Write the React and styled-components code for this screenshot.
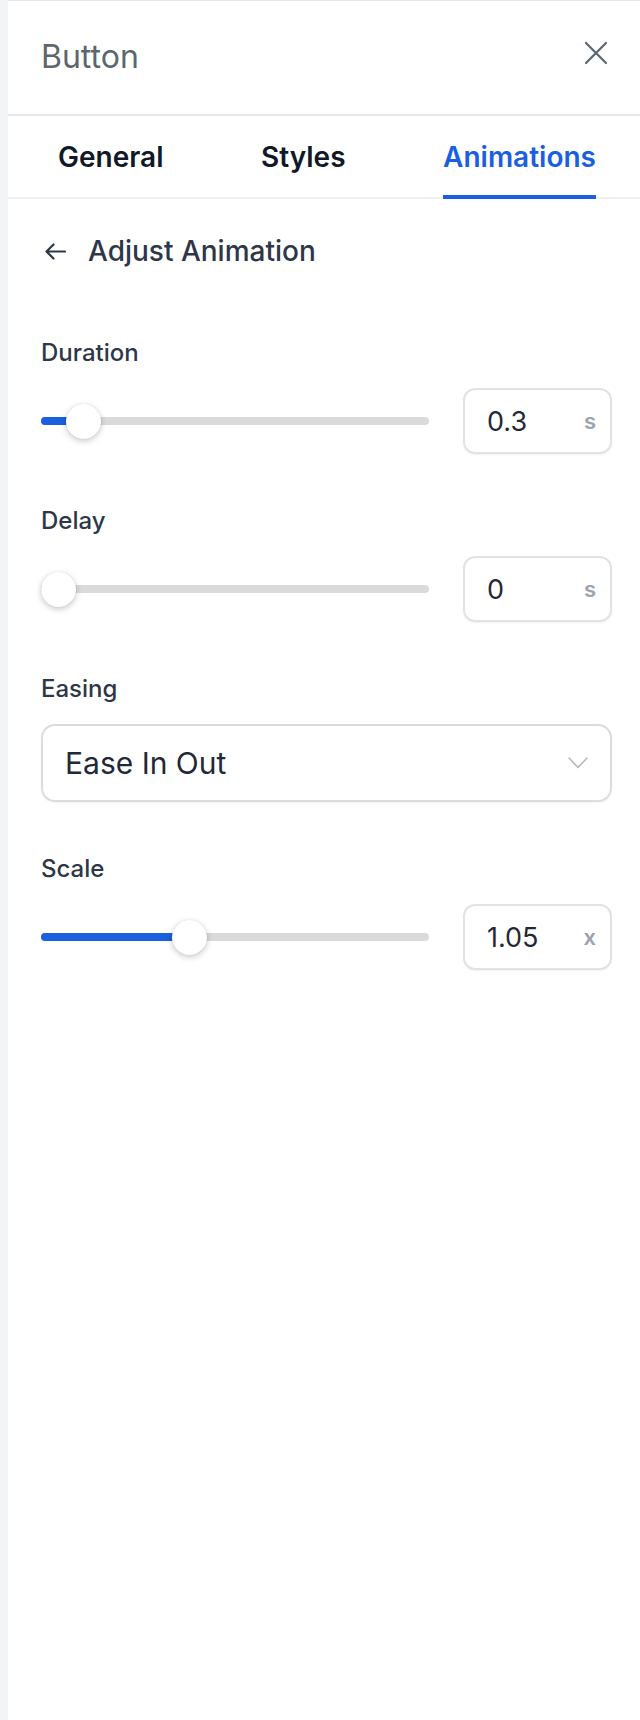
import React from "react";
import styled, { createGlobalStyle } from "styled-components";

const GlobalStyle = createGlobalStyle`
  html, body {
    margin: 0;
    padding: 0;
    background: #f3f4f6;
    font-family: Inter, "Noto Sans", sans-serif;
  }
  * {
    box-sizing: border-box;
  }
`;

const Panel = styled.div`
  margin-left: 8px;
  min-height: 1720px;
  background: #ffffff;
  border-top: 1px solid #e5e7eb;
  display: flex;
  flex-direction: column;
`;

const Header = styled.div`
  height: 115px;
  display: flex;
  align-items: center;
  justify-content: space-between;
  padding: 0 32px 0 33px;
  border-bottom: 2px solid #e5e7eb;
`;

const Title = styled.div`
  font-size: 32px;
  font-weight: 400;
  color: #5b666f;
  padding-bottom: 2px;
`;

const CloseButton = styled.button`
  border: 0;
  background: none;
  padding: 0;
  display: flex;
  color: #5b666f;
  margin-top: -10px;
`;

const Tabs = styled.div`
  height: 83px;
  display: flex;
  justify-content: space-between;
  padding: 0 44px 0 50px;
  border-bottom: 2px solid #f0f0f0;
`;

const Tab = styled.div`
  display: flex;
  align-items: center;
  padding-top: 2px;
  font-size: 28px;
  font-weight: 600;
  color: ${props => (props.active ? "#1a5fe0" : "#111827")};
  border-bottom: 4px solid ${props => (props.active ? "#1a5fe0" : "transparent")};
  margin-bottom: -2px;
`;

const Content = styled.div`
  padding: 37px 28px 0 33px;
  display: flex;
  flex-direction: column;
`;

const BackRow = styled.div`
  height: 30px;
  display: flex;
  align-items: center;
  gap: 22px;
  margin-bottom: 72px;
  color: #2d3748;
  font-size: 28px;
  font-weight: 500;
  svg {
    margin-left: 4px;
  }
`;

const Sections = styled.div`
  display: flex;
  flex-direction: column;
  gap: 52px;
`;

const Section = styled.div`
  display: flex;
  flex-direction: column;
`;

const Label = styled.div`
  font-size: 24px;
  line-height: 29px;
  font-weight: 500;
  color: #2d3748;
  margin-bottom: 21px;
`;

const ControlRow = styled.div`
  display: flex;
  align-items: center;
  gap: 34px;
`;

const Track = styled.div`
  position: relative;
  flex: 1;
  height: 8px;
  border-radius: 4px;
  background: #dadada;
`;

const Fill = styled.div`
  position: absolute;
  left: 0;
  top: 0;
  bottom: 0;
  border-radius: 4px;
  background: #1a5fe0;
`;

const Thumb = styled.div`
  position: absolute;
  top: 50%;
  width: 35px;
  height: 35px;
  margin-top: -17.5px;
  border-radius: 50%;
  background: #ffffff;
  box-shadow: 0 2px 6px rgba(0, 0, 0, 0.22), 0 0 1px rgba(0, 0, 0, 0.15);
`;

const NumberBox = styled.div`
  width: 149px;
  height: 66px;
  display: flex;
  align-items: center;
  justify-content: space-between;
  padding: 0 14px 0 22px;
  border: 2px solid #e2e2e2;
  border-radius: 12px;
  box-shadow: 0 1px 2px rgba(0, 0, 0, 0.05);
`;

const Value = styled.span`
  font-size: 27px;
  color: #1f2937;
`;

const Unit = styled.span`
  font-size: 22px;
  font-weight: 600;
  color: #9ca3af;
`;

const Select = styled.div`
  height: 78px;
  display: flex;
  align-items: center;
  justify-content: space-between;
  padding: 0 22px 0 22px;
  border: 2px solid #dcdcdc;
  border-radius: 14px;
  box-shadow: 0 1px 2px rgba(0, 0, 0, 0.05);
  font-size: 30px;
  color: #1f2937;
`;

const Slider = ({ pct }) => (
  <Track>
    <Fill style={{ width: `calc(${pct} * (100% - 35px) + 17px)` }} />
    <Thumb style={{ left: `calc(${pct} * (100% - 35px))` }} />
  </Track>
);

const sliders = [
  { label: "Duration", pct: 0.07, value: "0.3", unit: "s" },
  { label: "Delay", pct: 0, value: "0", unit: "s" },
];

const SliderSection = ({ label, pct, value, unit }) => (
  <Section>
    <Label>{label}</Label>
    <ControlRow>
      <Slider pct={pct} />
      <NumberBox>
        <Value>{value}</Value>
        <Unit>{unit}</Unit>
      </NumberBox>
    </ControlRow>
  </Section>
);

const App = () => {
  return (
    <>
      <GlobalStyle />
      <Panel>
        <Header>
          <Title>Button</Title>
          <CloseButton>
            <svg width="24" height="24" viewBox="0 0 24 24" fill="none" stroke="currentColor" strokeWidth="2.2" strokeLinecap="round">
              <path d="M2 2L22 22M22 2L2 22" />
            </svg>
          </CloseButton>
        </Header>
        <Tabs>
          <Tab>General</Tab>
          <Tab>Styles</Tab>
          <Tab active>Animations</Tab>
        </Tabs>
        <Content>
          <BackRow>
            <svg width="21" height="17" viewBox="0 0 21 17" fill="none" stroke="currentColor" strokeWidth="2.2" strokeLinecap="round" strokeLinejoin="round">
              <path d="M20 8.5H1.5M8.5 1.5L1.5 8.5L8.5 15.5" />
            </svg>
            Adjust Animation
          </BackRow>
          <Sections>
            {sliders.map(s => (
              <SliderSection key={s.label} {...s} />
            ))}
            <Section>
              <Label>Easing</Label>
              <Select>
                Ease In Out
                <svg width="20" height="12" viewBox="0 0 20 12" fill="none" stroke="#b8b8b8" strokeWidth="1.6" strokeLinecap="round" strokeLinejoin="round">
                  <path d="M1 1L10 10.5L19 1" />
                </svg>
              </Select>
            </Section>
            <SliderSection label="Scale" pct={0.37} value="1.05" unit="x" />
          </Sections>
        </Content>
      </Panel>
    </>
  );
};

export default App;
